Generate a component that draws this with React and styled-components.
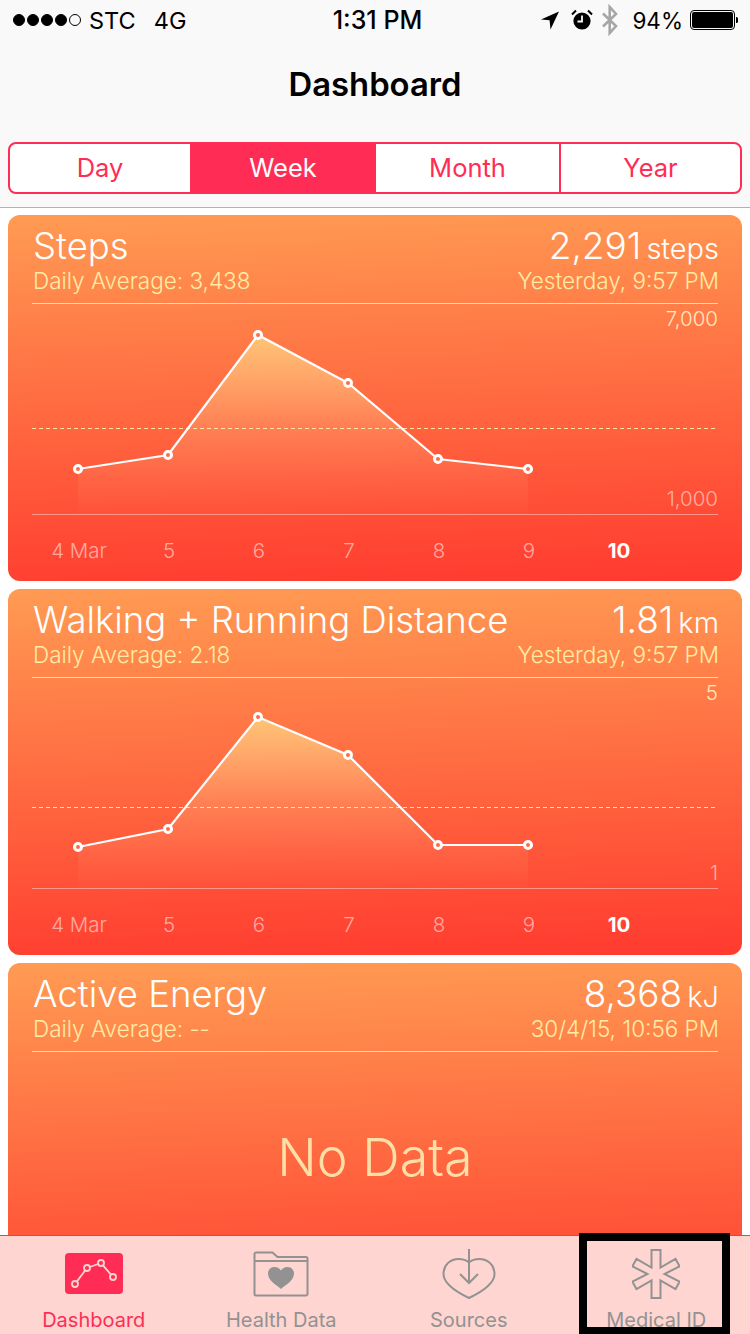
import React from 'react'
import styled, { createGlobalStyle } from 'styled-components'

const GlobalStyle = createGlobalStyle`
  html, body {
    margin: 0;
    background: #fff;
  }
  body {
    font-family: Inter, Roboto, "Liberation Sans", sans-serif;
  }
`

const PINK = '#ff2d55'
const TABS = ['Day', 'Week', 'Month', 'Year']
const DAYS = ['4 Mar', '5', '6', '7', '8', '9', '10']
const POINT_X = [46, 136, 226, 316, 406, 496]

const StatusIcons = () => (
  <>
    <svg width="20" height="20" viewBox="0 0 20 20">
      <path d="M19 1.500 1 9.600l8.600.6.900 9.200z" fill="#000" />
    </svg>
    <AlarmGap width="24" height="24" viewBox="0 0 24 24">
      <circle cx="12" cy="13" r="8.600" fill="#000" />
      <path d="M12 7.500V13.500H7.500" fill="none" stroke="#f9f9f9" strokeWidth="1.800" />
      <path d="M2 6.500 6 2.500M22 6.500l-4-4" stroke="#000" strokeWidth="2" />
    </AlarmGap>
    <BluetoothGap width="18" height="32" viewBox="0 0 18 32">
      <path d="M2 9.500 15 22 8.700 29V3L15 10 2 22.500" fill="none" stroke="#a6a6a6" strokeWidth="2.600" />
    </BluetoothGap>
  </>
)

const Battery = () => (
  <svg width="48" height="20" viewBox="0 0 48 20">
    <rect x="0.500" y="0.500" width="44" height="19" rx="3.500" fill="none" stroke="#000" strokeWidth="1" />
    <rect x="2" y="2" width="41" height="16" rx="2" fill="#000" />
    <path d="M46 7h.500a1.500 1.500 0 0 1 1.500 1.500v3a1.500 1.500 0 0 1-1.500 1.500H46z" fill="#000" />
  </svg>
)

const Chart = ({ id, values, top, bottom, dash }) => {
  const points = POINT_X.map((x, i) => `${x},${values[i]}`).join(' ')
  return (
    <ChartBox>
      <svg width="686" height="211" viewBox="0 0 686 211">
        <defs>
          <linearGradient id={id} x1="0" y1="0" x2="0" y2="1">
            <stop offset="0" stopColor="#ffc878" stopOpacity="0.95" />
            <stop offset="0.5" stopColor="#ffbd82" stopOpacity="0.32" />
            <stop offset="0.8" stopColor="#ffb98a" stopOpacity="0.12" />
            <stop offset="1" stopColor="#ffb98a" stopOpacity="0.02" />
          </linearGradient>
        </defs>
        <polygon points={`46,210 ${points} 496,210`} fill={`url(#${id})`} />
        <line x1="0" x2="686" y1={dash} y2={dash} stroke="#ffe3a8" strokeWidth="1" strokeDasharray="4 3" />
        <line x1="0" x2="686" y1="210.500" y2="210.500" stroke="#ffffff" strokeOpacity="0.42" strokeWidth="1" />
        <polyline points={points} fill="none" stroke="#fff" strokeWidth="2.200" />
        {POINT_X.map((x, i) => (
          <circle key={x} cx={x} cy={values[i]} r="3.500" fill="#ff6b47" stroke="#fff" strokeWidth="3" />
        ))}
      </svg>
      <AxisTop>{top}</AxisTop>
      <AxisBottom>{bottom}</AxisBottom>
    </ChartBox>
  )
}

const Card = ({ title, value, unit, average, when, children }) => (
  <CardBox>
    <CardHead>
      <HeadRow>
        <Title>{title}</Title>
        <Value>
          {value}
          <Unit>{unit}</Unit>
        </Value>
      </HeadRow>
      <HeadRow>
        <SubText>{average}</SubText>
        <SubText>{when}</SubText>
      </HeadRow>
    </CardHead>
    {children}
  </CardBox>
)

const DayRow = () => (
  <Days>
    {DAYS.map((d) => (
      <Day key={d} $today={d === '10'}>
        {d}
      </Day>
    ))}
  </Days>
)

const DashboardIcon = () => (
  <svg width="58" height="41" viewBox="0 0 58 41">
    <rect width="58" height="41" rx="4" fill={PINK} />
    <polyline points="10,31 22,15 36,10 48,24" fill="none" stroke="#ffd5d0" strokeWidth="1.800" />
    {[[10, 31], [22, 15], [36, 10], [48, 24]].map(([x, y]) => (
      <circle key={x} cx={x} cy={y} r="3" fill={PINK} stroke="#ffd5d0" strokeWidth="1.800" />
    ))}
  </svg>
)

const FolderIcon = () => (
  <svg width="56" height="46" viewBox="0 0 56 46">
    <path
      d="M1.500 43V3a1.500 1.500 0 0 1 1.500-1.500h16.500l5 4.500H53a1.500 1.500 0 0 1 1.500 1.500V43a1.500 1.500 0 0 1-1.500 1.500H3A1.500 1.500 0 0 1 1.500 43zM1.500 10H54.500"
      fill="none"
      stroke="#929292"
      strokeWidth="2"
    />
    <path
      d="M28 38c-3-3-13-8-13-15.500C15 18.500 18 16 21.500 16c3 0 5 1.500 6.500 3.500 1.500-2 3.500-3.500 6.500-3.500 3.500 0 6.500 2.500 6.500 6.500C41 30 31 35 28 38z"
      fill="#929292"
    />
  </svg>
)

const SourcesIcon = () => (
  <svg width="54" height="50" viewBox="0 0 54 50">
    <path
      d="M17 10C8 10 1.500 16 1.500 25c0 10 13 18 25.500 24C39.500 43 52.500 35 52.500 25c0-9-6.500-15-15.500-15-4 0-7 1-10 3.500C24 11 21 10 17 10z"
      fill="none"
      stroke="#929292"
      strokeWidth="2"
    />
    <path d="M27 0v33M18 25l9 9 9-9" fill="none" stroke="#929292" strokeWidth="2" />
  </svg>
)

const MedicalIcon = () => (
  <svg width="48" height="50" viewBox="0 0 48 50">
    <path
      d="M19.500 1h9v17.500l15-8.700 4 7.500L32.500 25l15 7.700-4 7.500-15-8.700V49h-9V31.500l-15 8.700-4-7.500L15.500 25l-15-7.700 4-7.500 15 8.700z"
      fill="none"
      stroke="#929292"
      strokeWidth="2"
    />
  </svg>
)

const App = () => (
  <>
    <GlobalStyle />
    <Page>
      <Header>
        <StatusBar>
          <Signal>
            {[0, 1, 2, 3, 4].map((i) => (
              <Dot key={i} $empty={i === 4} />
            ))}
            <Carrier>STC</Carrier>
            <Network>4G</Network>
          </Signal>
          <Clock>1:31 PM</Clock>
          <StatusRight>
            <StatusIcons />
            <Percent>94%</Percent>
            <Battery />
          </StatusRight>
        </StatusBar>
        <NavTitle>Dashboard</NavTitle>
        <Segments>
          {TABS.map((t) => (
            <Segment key={t} $active={t === 'Week'} $divider={t === 'Year'}>
              {t}
            </Segment>
          ))}
        </Segments>
      </Header>
      <Cards>
        <Card title="Steps" value="2,291" unit="steps" average="Daily Average: 3,438" when="Yesterday, 9:57 PM">
          <Chart id="steps" values={[165, 151, 31, 79, 155, 165]} top="7,000" bottom="1,000" dash={124.5} />
          <DayRow />
        </Card>
        <Card
          title="Walking + Running Distance"
          value="1.81"
          unit="km"
          average="Daily Average: 2.18"
          when="Yesterday, 9:57 PM"
        >
          <Chart id="distance" values={[169, 151, 39, 77, 167, 167]} top="5" bottom="1" dash={129.5} />
          <DayRow />
        </Card>
        <Card title="Active Energy" value="8,368" unit="kJ" average="Daily Average: --" when="30/4/15, 10:56 PM">
          <NoData>No Data</NoData>
        </Card>
      </Cards>
      <TabBar>
        <TabItem $active>
          <TabIcon>
            <DashboardIcon />
          </TabIcon>
          Dashboard
        </TabItem>
        <TabItem>
          <TabIcon>
            <FolderIcon />
          </TabIcon>
          Health Data
        </TabItem>
        <TabItem>
          <TabIcon>
            <SourcesIcon />
          </TabIcon>
          Sources
        </TabItem>
        <TabItem>
          <TabIcon>
            <MedicalIcon />
          </TabIcon>
          Medical ID
        </TabItem>
      </TabBar>
      <Highlight />
    </Page>
  </>
)

const Page = styled.div`
  position: relative;
  width: 750px;
  height: 1334px;
  overflow: hidden;
  background: #fff;
`

const Header = styled.header`
  box-sizing: border-box;
  height: 208px;
  padding: 0 8px;
  background: #f9f9f9;
  border-bottom: 1px solid #b2b2b2;
`

const StatusBar = styled.div`
  display: grid;
  grid-template-columns: 1fr auto 1fr;
  align-items: center;
  height: 40px;
  margin: 0 4px 0 5px;
  font-size: 24px;
  color: #000;
`

const Signal = styled.div`
  display: flex;
  align-items: center;
  gap: 2px;
`

const Dot = styled.span`
  box-sizing: border-box;
  width: 12px;
  height: 12px;
  border-radius: 50%;
  background: ${(p) => (p.$empty ? 'transparent' : '#000')};
  border: 1px solid #000;
`

const Carrier = styled.span`
  margin-left: 6px;
  font-size: 23.5px;
`

const Network = styled.span`
  margin-left: 16px;
  font-size: 23.5px;
`

const Clock = styled.div`
  margin-left: 4px;
  font-size: 25px;
  font-weight: 500;
`

const StatusRight = styled.div`
  display: flex;
  align-items: center;
  justify-content: flex-end;
`

const AlarmGap = styled.svg`
  margin-left: 10px;
`

const BluetoothGap = styled.svg`
  margin-left: 7px;
`

const Percent = styled.span`
  margin: 0 7px 0 13px;
  font-size: 22.5px;
`

const NavTitle = styled.h1`
  margin: 0;
  height: 88px;
  padding-bottom: 1px;
  box-sizing: border-box;
  display: flex;
  align-items: center;
  justify-content: center;
  font-size: 32.8px;
  font-weight: 600;
  color: #000;
`

const Segments = styled.div`
  display: grid;
  grid-template-columns: 180px 186px 183px 1fr;
  height: 52px;
  margin-top: 14px;
  box-sizing: border-box;
  border: 2px solid ${PINK};
  border-radius: 8px;
  overflow: hidden;
  background: #fff;
`

const Segment = styled.div`
  display: flex;
  align-items: center;
  justify-content: center;
  padding-bottom: 2px;
  font-size: 25.5px;
  color: ${(p) => (p.$active ? '#fff' : PINK)};
  background: ${(p) => (p.$active ? PINK : 'transparent')};
  border-left: ${(p) => (p.$divider ? `2px solid ${PINK}` : '0')};
`

const Cards = styled.main`
  display: flex;
  flex-direction: column;
  gap: 8px;
  padding: 7px 8px 0;
`

const CardBox = styled.section`
  box-sizing: border-box;
  height: 366px;
  flex: none;
  padding: 0 24px;
  border-radius: 12px;
  background: linear-gradient(178deg, #ff9b53 0%, #ff3a2f 100%);
`

const CardHead = styled.div`
  box-sizing: border-box;
  height: 89px;
  padding-top: 11px;
  border-bottom: 1px solid #ffe0a0;
`

const HeadRow = styled.div`
  display: flex;
  align-items: baseline;
  justify-content: space-between;
  white-space: nowrap;
`

const Title = styled.div`
  margin-left: 1px;
  font-size: 36.5px;
  line-height: 40px;
  font-weight: 300;
  color: #fff;
`

const Value = styled.div`
  margin-right: -1px;
  font-size: 37px;
  line-height: 40px;
  font-weight: 300;
  color: #fff;
`

const Unit = styled.span`
  margin-left: 5px;
  font-size: 29px;
`

const SubText = styled.div`
  padding-left: 1px;
  margin-right: -1px;
  font-size: 22.5px;
  line-height: 24px;
  font-weight: 300;
  color: #ffeca6;
`

const ChartBox = styled.div`
  position: relative;
  height: 211px;
  svg {
    display: block;
  }
`

const AxisTop = styled.div`
  position: absolute;
  top: 3px;
  right: 0;
  font-size: 20.5px;
  line-height: 24px;
  font-weight: 300;
  color: #ffe7c2;
`

const AxisBottom = styled(AxisTop)`
  top: auto;
  bottom: 4px;
  color: rgba(255, 255, 255, 0.55);
`

const Days = styled.div`
  display: grid;
  grid-template-columns: repeat(7, 90px);
  padding-top: 24px;
  margin-left: 2px;
`

const Day = styled.div`
  text-align: center;
  font-size: 20.5px;
  line-height: 24px;
  font-weight: ${(p) => (p.$today ? 700 : 300)};
  color: ${(p) => (p.$today ? '#fff' : 'rgba(255, 255, 255, 0.55)')};
`

const NoData = styled.div`
  padding-top: 76px;
  text-align: center;
  font-size: 52px;
  line-height: 60px;
  font-weight: 300;
  color: #ffdfa8;
`

const TabBar = styled.nav`
  position: absolute;
  left: 0;
  right: 0;
  bottom: 0;
  height: 99px;
  display: grid;
  grid-template-columns: repeat(4, 1fr);
  background: #fed5d0;
  border-top: 1px solid #e2492f;
  box-sizing: border-box;
`

const TabItem = styled.div`
  display: flex;
  flex-direction: column;
  align-items: center;
  font-size: 20px;
  line-height: 24px;
  white-space: nowrap;
  color: ${(p) => (p.$active ? PINK : '#929292')};
`

const TabIcon = styled.div`
  height: 51px;
  margin: 12px 0 9px;
  display: flex;
  align-items: center;
  justify-content: center;
  svg {
    display: block;
  }
`

const Highlight = styled.div`
  position: absolute;
  left: 579px;
  top: 1233px;
  width: 135px;
  height: 86px;
  border: 8px solid #000;
`

export default App
